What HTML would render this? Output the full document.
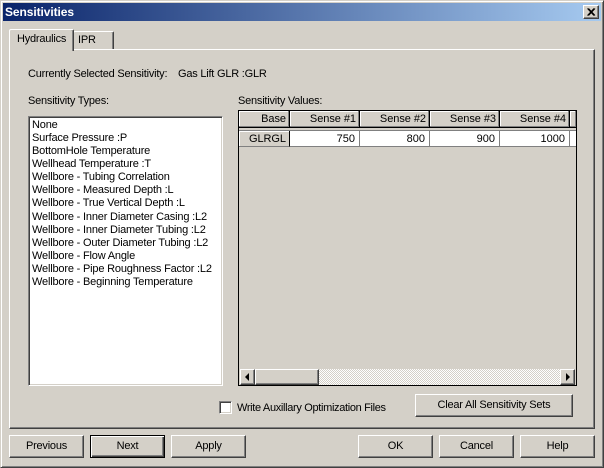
<!DOCTYPE html>
<html><head><meta charset="utf-8"><style>
html,body{margin:0;padding:0;background:#d4d0c8}
#w{position:relative;width:604px;height:468px;overflow:hidden;background:#d4d0c8;font:11px "Liberation Sans",sans-serif;letter-spacing:-.22px;color:#000}
#w div{position:absolute;box-sizing:border-box}
.t{white-space:nowrap;line-height:14px;height:14px}
.b{background:#d4d0c8;border:1px solid;border-color:#fff #404040 #404040 #fff;box-shadow:inset -1px -1px 0 #808080;text-align:center;line-height:20px;white-space:nowrap}
.h{background:#d4d0c8;border-right:1px solid #000;border-bottom:1px solid #000;box-shadow:inset -1px -1px 0 #808080,inset 1px 1px 0 #fff;text-align:right;padding-right:3px;line-height:17px;white-space:nowrap;letter-spacing:-.05px}
.c{background:#fff;border-right:1px solid #808080;border-bottom:1px solid #808080;text-align:right;padding-right:4px;line-height:16px;letter-spacing:0}
#l{line-height:13.08px;white-space:nowrap;letter-spacing:-.18px}
</style></head><body><div id="w">
<div style="left:0;top:0;width:604px;height:468px;border:1px solid;border-color:#d4d0c8 #404040 #404040 #d4d0c8;box-shadow:inset 1px 1px 0 #fff,inset -1px -1px 0 #808080"></div>
<div style="left:3px;top:3px;width:598px;height:18px;background:linear-gradient(90deg,#0a246a,#a6caf0)"></div>
<div class="t" style="left:5px;top:5px;color:#fff;font-weight:bold;font-size:12px;letter-spacing:-.08px">Sensitivities</div>
<div class="b" style="left:583px;top:5px;width:16px;height:14px;padding:0"><svg width="14" height="12" style="position:absolute;left:0;top:0"><path d="M3.5 2.5L10 9.5M4.5 2.5L11 9.5M10 2.5L3.5 9.5M11 2.5L4.5 9.5" stroke="#000" fill="none"/></svg></div>

<div style="left:9px;top:49px;width:586px;height:380px;border:1px solid;border-color:#fff #404040 #404040 #fff;box-shadow:inset -1px -1px 0 #808080"></div>
<div style="left:73px;top:31px;width:41px;height:19px;background:#d4d0c8;border:1px solid;border-color:#fff #404040 #d4d0c8 #fff;border-bottom:0;border-radius:2px 2px 0 0;box-shadow:inset -1px 0 0 #808080"></div>
<div style="left:73px;top:49px;width:41px;height:1px;background:#fff"></div>
<div class="t" style="left:78px;top:33px">IPR</div>
<div style="left:9px;top:29px;width:65px;height:22px;background:#d4d0c8;border:1px solid;border-color:#fff #404040 #d4d0c8 #fff;border-bottom:0;border-radius:2px 2px 0 0;box-shadow:inset -1px 0 0 #808080"></div>
<div class="t" style="left:17px;top:32px">Hydraulics</div>

<div class="t" style="left:28px;top:67px">Currently Selected Sensitivity:</div>
<div class="t" style="left:178px;top:67px">Gas Lift GLR :GLR</div>
<div class="t" style="left:28px;top:94px">Sensitivity Types:</div>
<div class="t" style="left:238px;top:94px">Sensitivity Values:</div>

<div style="left:28px;top:116px;width:195px;height:270px;background:#fff;border:1px solid;border-color:#808080 #fff #fff #808080;box-shadow:inset 1px 1px 0 #404040,inset -1px -1px 0 #d4d0c8"></div>
<div id="l" style="left:32px;top:119px">None<br>Surface Pressure :P<br>BottomHole Temperature<br>Wellhead Temperature :T<br>Wellbore - Tubing Correlation<br>Wellbore - Measured Depth :L<br>Wellbore - True Vertical Depth :L<br>Wellbore - Inner Diameter Casing :L2<br>Wellbore - Inner Diameter Tubing :L2<br>Wellbore - Outer Diameter Tubing :L2<br>Wellbore - Flow Angle<br>Wellbore - Pipe Roughness Factor :L2<br>Wellbore - Beginning Temperature</div>

<div style="left:238px;top:110px;width:339px;height:276px;background:#d4d0c8;border:1px solid #000"></div>
<div class="h" style="left:239px;top:111px;width:51px;height:17px">Base</div>
<div class="h" style="left:290px;top:111px;width:70px;height:17px">Sense #1</div>
<div class="h" style="left:360px;top:111px;width:70px;height:17px">Sense #2</div>
<div class="h" style="left:430px;top:111px;width:70px;height:17px">Sense #3</div>
<div class="h" style="left:500px;top:111px;width:70px;height:17px">Sense #4</div>
<div class="h" style="left:570px;top:111px;width:6px;height:17px;border-right:0;padding:0"></div>
<div style="left:239px;top:130px;width:337px;height:1px;background:#808080"></div>
<div class="h" style="left:239px;top:131px;width:51px;height:16px;line-height:16px;padding-right:3px;border-bottom-color:#808080;border-right-color:#000;box-shadow:inset 1px 1px 0 #fff">GLRGL</div>
<div class="c" style="left:290px;top:131px;width:70px;height:16px">750</div>
<div class="c" style="left:360px;top:131px;width:70px;height:16px">800</div>
<div class="c" style="left:430px;top:131px;width:70px;height:16px">900</div>
<div class="c" style="left:500px;top:131px;width:70px;height:16px">1000</div>
<div style="left:570px;top:131px;width:6px;height:16px;background:#fff;border-bottom:1px solid #808080"></div>

<div style="left:240px;top:369px;width:335px;height:16px;background-color:#eeeeec;background-image:repeating-conic-gradient(#d4d0c8 0 25%,#fff 0 50%);background-size:2px 2px"></div>
<div class="b" style="left:240px;top:369px;width:15px;height:16px"><svg width="13" height="14" style="position:absolute;left:0;top:0"><path d="M8 3v8L4 7z" fill="#000"/></svg></div>
<div class="b" style="left:255px;top:369px;width:64px;height:16px"></div>
<div class="b" style="left:560px;top:369px;width:15px;height:16px"><svg width="13" height="14" style="position:absolute;left:0;top:0"><path d="M5 3v8L9 7z" fill="#000"/></svg></div>

<div style="left:219px;top:401px;width:13px;height:13px;background:#fff;border:1px solid;border-color:#808080 #fff #fff #808080;box-shadow:inset 1px 1px 0 #404040,inset -1px -1px 0 #d4d0c8"></div>
<div class="t" style="left:237px;top:401px;letter-spacing:-.33px">Write Auxillary Optimization Files</div>
<div class="b" style="left:415px;top:394px;width:158px;height:23px">Clear All Sensitivity Sets</div>

<div class="b" style="left:9px;top:435px;width:75px;height:23px">Previous</div>
<div class="b" style="left:90px;top:435px;width:75px;height:23px;border:1px solid #000;box-shadow:inset 1px 1px 0 #fff,inset -1px -1px 0 #404040,inset -2px -2px 0 #808080">Next</div>
<div class="b" style="left:171px;top:435px;width:75px;height:23px">Apply</div>
<div class="b" style="left:358px;top:435px;width:75px;height:23px">OK</div>
<div class="b" style="left:439px;top:435px;width:75px;height:23px">Cancel</div>
<div class="b" style="left:520px;top:435px;width:75px;height:23px">Help</div>
</div></body></html>
